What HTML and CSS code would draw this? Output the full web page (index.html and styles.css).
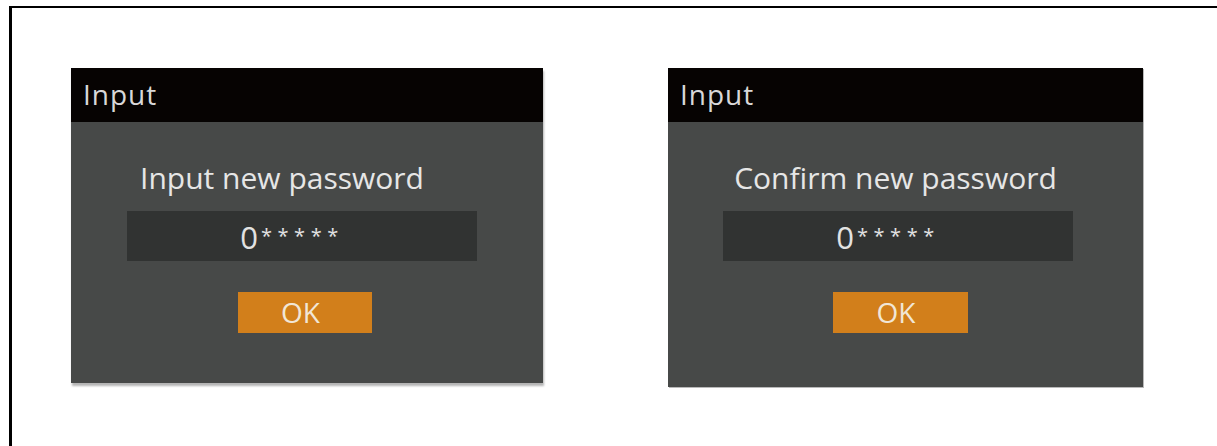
FILE: index.html
```html
<!DOCTYPE html>
<html>
<head>
<meta charset="utf-8">
<link rel="stylesheet" href="styles.css">
</head>
<body>
<div class="frame">
  <div class="dialog dialog--left">
    <div class="dialog__head">Input</div>
    <div class="dialog__body">
      <div class="dialog__label">Input new password</div>
      <div class="dialog__field">0<span class="mask">*****</span></div>
      <div class="dialog__ok">OK</div>
    </div>
  </div>
  <div class="dialog dialog--right">
    <div class="dialog__head">Input</div>
    <div class="dialog__body">
      <div class="dialog__label">Confirm new password</div>
      <div class="dialog__field">0<span class="mask">*****</span></div>
      <div class="dialog__ok">OK</div>
    </div>
  </div>
</div>
</body>
</html>
```
FILE: styles.css
```css
html, body {
  margin: 0;
  padding: 0;
  overflow: hidden;
  background: #fff;
  font-family: "Open Sans", "DejaVu Sans", sans-serif;
}
.frame {
  margin: 6px 0 0 9px;
  width: 1240px;
  height: 460px;
  border-top: 2px solid #000;
  border-left: 3px solid #000;
  padding: 60px 0 0 59px;
  box-sizing: border-box;
  display: flex;
  align-items: flex-start;
  gap: 125px;
}
.dialog {
  display: flex;
  flex-direction: column;
  background: #474948;
}
.dialog--left {
  width: 472px;
  box-shadow: 1px 3px 2px #b5b5b5;
}
.dialog--right {
  width: 475px;
  box-shadow: 1px 1px 0 #b9b9b9;
}
.dialog__head {
  height: 54px;
  background: #060302;
  color: #d8d8d8;
  font-size: 28px;
  line-height: 52px;
  padding-left: 12px;
  letter-spacing: 1px;
}
.dialog__body {
  display: flex;
  flex-direction: column;
  align-items: center;
  padding-top: 38px;
  box-sizing: border-box;
}
.dialog--left .dialog__body { height: 261px; }
.dialog--right .dialog__body { height: 265px; }
.dialog__label {
  color: #e6e6e6;
  font-size: 30px;
  line-height: 36px;
}
.dialog--left .dialog__label { margin-right: 50px; }
.dialog--right .dialog__label { margin-right: 20px; }
.dialog__field {
  margin-top: 15px;
  width: 350px;
  height: 50px;
  box-sizing: border-box;
  padding-right: 20px;
  background: #313332;
  color: #e2e2e2;
  font-size: 31px;
  line-height: 50px;
  text-align: center;
}
.dialog--left .dialog__field { margin-right: 10px; }
.dialog--right .dialog__field { margin-right: 15px; }
.mask {
  font-size: 20px;
  vertical-align: 6px;
  letter-spacing: 5.5px;
  margin-left: 3px;
}
.dialog__ok {
  margin-top: 31px;
  width: 134px;
  height: 41px;
  box-sizing: border-box;
  padding-right: 9px;
  background: #d27f1b;
  color: #f1e6d6;
  font-size: 28px;
  line-height: 41px;
  text-align: center;
}
.dialog--left .dialog__ok { margin-right: 4px; }
.dialog--right .dialog__ok { margin-right: 10px; width: 135px; }
```
